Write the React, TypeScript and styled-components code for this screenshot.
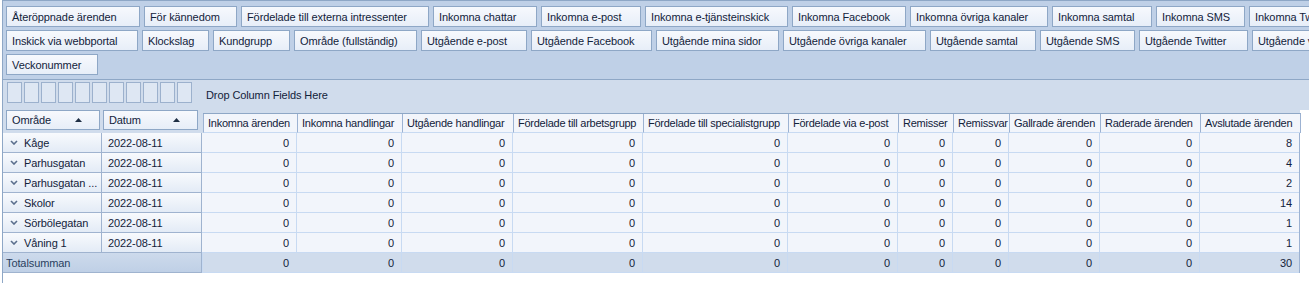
import React from 'react';
import styled, { createGlobalStyle } from 'styled-components';

const GlobalStyle = createGlobalStyle`
  html, body {
    margin: 0;
    padding: 0;
    background: #ffffff;
  }
  body {
    font-family: 'Liberation Sans', Arial, sans-serif;
    font-size: 11px;
    letter-spacing: -0.1px;
    color: #12223a;
    overflow: hidden;
  }
`;

const color = {
  fieldArea: '#bfd0e7',
  filterArea: '#d0dcec',
  border: '#8ea7c6',
  cell: '#f2f5fb',
  cellLine: '#c8daf2',
  headerLine: '#9cb2d2',
  total: '#d0dcec',
  text: '#12223a',
};

type Field = { title: string; width: number };

const fieldRows: Field[][] = [
  [
    { title: 'Återöppnade ärenden', width: 134 },
    { title: 'För kännedom', width: 93 },
    { title: 'Fördelade till externa intressenter', width: 188 },
    { title: 'Inkomna chattar', width: 104 },
    { title: 'Inkomna e-post', width: 100 },
    { title: 'Inkomna e-tjänsteinskick', width: 143 },
    { title: 'Inkomna Facebook', width: 114 },
    { title: 'Inkomna övriga kanaler', width: 138 },
    { title: 'Inkomna samtal', width: 100 },
    { title: 'Inkomna SMS', width: 89 },
    { title: 'Inkomna Twitter', width: 110 },
  ],
  [
    { title: 'Inskick via webbportal', width: 132 },
    { title: 'Klockslag', width: 67 },
    { title: 'Kundgrupp', width: 77 },
    { title: 'Område (fullständig)', width: 123 },
    { title: 'Utgående e-post', width: 106 },
    { title: 'Utgående Facebook', width: 121 },
    { title: 'Utgående mina sidor', width: 123 },
    { title: 'Utgående övriga kanaler', width: 143 },
    { title: 'Utgående samtal', width: 106 },
    { title: 'Utgående SMS', width: 95 },
    { title: 'Utgående Twitter', width: 109 },
    { title: 'Utgående via webbportal', width: 140 },
  ],
  [{ title: 'Veckonummer', width: 92 }],
];

const columns: Field[] = [
  { title: 'Inkomna ärenden', width: 94 },
  { title: 'Inkomna handlingar', width: 105 },
  { title: 'Utgående handlingar', width: 111 },
  { title: 'Fördelade till arbetsgrupp', width: 130 },
  { title: 'Fördelade till specialistgrupp', width: 145 },
  { title: 'Fördelade via e-post', width: 110 },
  { title: 'Remisser', width: 55 },
  { title: 'Remissvar', width: 56 },
  { title: 'Gallrade ärenden', width: 91 },
  { title: 'Raderade ärenden', width: 100 },
  { title: 'Avslutade ärenden', width: 100 },
];

const rows = [
  { area: 'Kåge', date: '2022-08-11', closed: 8 },
  { area: 'Parhusgatan', date: '2022-08-11', closed: 4 },
  { area: 'Parhusgatan ...', date: '2022-08-11', closed: 2 },
  { area: 'Skolor', date: '2022-08-11', closed: 14 },
  { area: 'Sörbölegatan', date: '2022-08-11', closed: 1 },
  { area: 'Våning 1', date: '2022-08-11', closed: 1 },
];

const SortArrow = () => (
  <svg width="7" height="4" viewBox="0 0 7 4">
    <polygon points="0,4 3.5,0 7,4" fill="#1e2e44" />
  </svg>
);

const Chevron = () => (
  <svg width="8" height="5" viewBox="0 0 8 5">
    <polyline
      points="1,1 4,4 7,1"
      fill="none"
      stroke="#5b6f8d"
      strokeWidth="1.6"
    />
  </svg>
);

const App: React.FC = () => {
  const total = rows.reduce((sum, r) => sum + r.closed, 0);
  return (
    <>
      <GlobalStyle />
      <Pivot>
        <FieldArea>
          {fieldRows.map((row, i) => (
            <FieldRow key={i}>
              {row.map((f) => (
                <FieldButton key={f.title} $width={f.width}>
                  {f.title}
                </FieldButton>
              ))}
            </FieldRow>
          ))}
        </FieldArea>

        <FilterBar>
          <DropBoxes>
            {[...Array(11).keys()].map((k) => (
              <DropBox key={k} />
            ))}
          </DropBoxes>
          <DropText>Drop Column Fields Here</DropText>
        </FilterBar>

        <Grid>
          <HeaderRow>
            <RowFieldButton $width={94}>
              <span>Område</span>
              <SortArrow />
            </RowFieldButton>
            <RowFieldButton $width={95}>
              <span>Datum</span>
              <SortArrow />
            </RowFieldButton>
            <ColumnHeaders>
              {columns.map((c) => (
                <ColumnHeader key={c.title} $width={c.width}>
                  {c.title}
                </ColumnHeader>
              ))}
            </ColumnHeaders>
          </HeaderRow>

          {rows.map((r) => (
            <DataRow key={r.area}>
              <RowHead $width={99}>
                <Chevron />
                <span>{r.area}</span>
              </RowHead>
              <RowHead $width={100}>{r.date}</RowHead>
              {columns.map((c, i) => (
                <Cell key={c.title} $width={c.width}>
                  {i === columns.length - 1 ? r.closed : 0}
                </Cell>
              ))}
            </DataRow>
          ))}

          <DataRow>
            <TotalHead>Totalsumman</TotalHead>
            {columns.map((c, i) => (
              <Cell key={c.title} $width={c.width} $total>
                {i === columns.length - 1 ? total : 0}
              </Cell>
            ))}
          </DataRow>
        </Grid>
      </Pivot>
    </>
  );
};

const Pivot = styled.div`
  margin-left: 2px;
  width: 1307px;
  height: 283px;
  border-left: 1px solid ${color.border};
  box-sizing: border-box;
  background: #ffffff;
`;

const FieldArea = styled.div`
  background: ${color.fieldArea};
  border-top: 1px solid ${color.border};
  border-bottom: 1px solid ${color.border};
  padding: 5px 0 4px 3px;
  display: flex;
  flex-direction: column;
  gap: 3px;
`;

const FieldRow = styled.div`
  display: flex;
  gap: 4px;
  overflow: hidden;
  white-space: nowrap;
`;

const FieldButton = styled.div<{ $width: number }>`
  flex: 0 0 auto;
  width: ${(p) => p.$width}px;
  height: 21px;
  box-sizing: border-box;
  border: 1px solid ${color.border};
  background: linear-gradient(#f7f9fd, #e7eef8);
  padding: 0 5px;
  display: flex;
  align-items: center;
  color: ${color.text};
  overflow: hidden;
`;

const FilterBar = styled.div`
  height: 30px;
  background: ${color.filterArea};
  display: flex;
  align-items: flex-start;
  padding: 2px 0 0 4px;
  box-sizing: border-box;
`;

const DropBoxes = styled.div`
  display: flex;
  gap: 2px;
`;

const DropBox = styled.div`
  width: 15px;
  height: 21px;
  box-sizing: border-box;
  border: 1px solid #9cb1cd;
  background: #dee7f3;
`;

const DropText = styled.span`
  margin-left: 14px;
  line-height: 27px;
  color: ${color.text};
`;

const Grid = styled.div`
  width: 1297px;
  display: flex;
  flex-direction: column;
`;

const HeaderRow = styled.div`
  display: flex;
  align-items: flex-start;
  height: 23px;
  background: ${color.filterArea};
  padding-left: 3px;
  gap: 3px;
`;

const RowFieldButton = styled.div<{ $width: number }>`
  flex: 0 0 auto;
  width: ${(p) => p.$width}px;
  height: 20px;
  box-sizing: border-box;
  border: 1px solid ${color.border};
  background: linear-gradient(#f7f9fd, #e7eef8);
  padding: 0 17px 0 5px;
  display: flex;
  align-items: center;
  justify-content: space-between;
  color: ${color.text};
`;

const ColumnHeaders = styled.div`
  display: flex;
  align-self: flex-end;
  margin-left: 2px;
  background: ${color.cell};
  border-top: 1px solid ${color.border};
  border-right: 1px solid ${color.headerLine};
`;

const ColumnHeader = styled.div<{ $width: number }>`
  width: ${(p) => p.$width}px;
  height: 19px;
  box-sizing: border-box;
  border-left: 1px solid ${color.headerLine};
  border-bottom: 1px solid ${color.cellLine};
  padding-left: 4px;
  display: flex;
  align-items: center;
  white-space: nowrap;
  overflow: hidden;
  letter-spacing: -0.25px;
  color: ${color.text};
`;

const DataRow = styled.div`
  display: flex;
  height: 20px;
  border-right: 1px solid ${color.headerLine};
  box-sizing: content-box;
  width: 1296px;
`;

const RowHead = styled.div<{ $width: number }>`
  flex: 0 0 auto;
  width: ${(p) => p.$width}px;
  box-sizing: border-box;
  border-right: 1px solid #9fb3cf;
  border-bottom: 1px solid #9fb3cf;
  background: linear-gradient(#f8fafd, #e3ebf6);
  padding-left: 6px;
  display: flex;
  align-items: center;
  gap: 6px;
  white-space: nowrap;
  overflow: hidden;
  color: ${color.text};

  &:first-child {
    padding-left: 7px;
  }
`;

const TotalHead = styled.div`
  flex: 0 0 auto;
  width: 199px;
  box-sizing: border-box;
  border-right: 1px solid #9fb3cf;
  border-bottom: 1px solid #9fb3cf;
  background: linear-gradient(#cddaec, #bfd0e6);
  padding-left: 3px;
  display: flex;
  align-items: center;
  color: #2a3f60;
`;

const Cell = styled.div<{ $width: number; $total?: boolean }>`
  flex: 0 0 auto;
  width: ${(p) => p.$width}px;
  box-sizing: border-box;
  border-left: 1px solid ${color.cellLine};
  border-bottom: 1px solid ${color.cellLine};
  background: ${(p) => (p.$total ? color.total : color.cell)};
  padding-right: 7px;
  display: flex;
  align-items: center;
  justify-content: flex-end;
  color: ${color.text};

  &:nth-child(3) {
    border-left: none;
  }
`;

export default App;
